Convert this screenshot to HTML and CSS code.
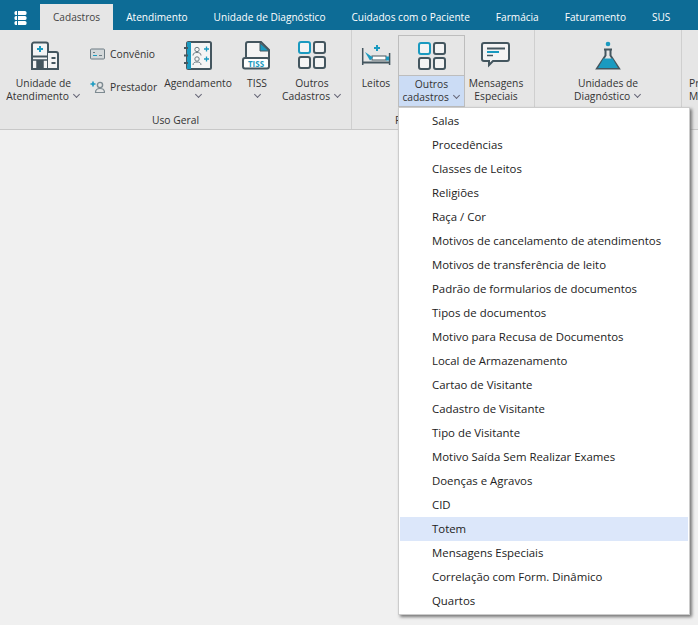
FILE: index.html
```html
<!DOCTYPE html>
<html lang="pt-BR">
  <head>
    <meta charset="UTF-8">
    <meta name="viewport" content="width=device-width, initial-scale=1.0">
    <title>Cadastros</title>
    <link rel="stylesheet" href="styles.css">
  </head>
  <body>
    <div class="tabs">
      <div class="app-icon">
        <svg width="13" height="14" viewBox="0 0 13 14"><rect x="0.500" y="0" width="12" height="4" rx="1.500" fill="#fff"/><rect x="0.500" y="5" width="12" height="4" rx="1.500" fill="#fff"/><rect x="0.500" y="10" width="12" height="4" rx="1.500" fill="#fff"/><path d="M3.500 0v14" stroke="#0d6c96"/></svg>
      </div>
      <div class="tab tab-active">Cadastros</div>
      <div class="tab">Atendimento</div>
      <div class="tab">Unidade de Diagnóstico</div>
      <div class="tab">Cuidados com o Paciente</div>
      <div class="tab">Farmácia</div>
      <div class="tab">Faturamento</div>
      <div class="tab">SUS</div>
    </div>

    <div class="ribbon">
      <div class="group group-geral">
        <div class="group-items">
          <div class="btn btn-unidade">
            <svg class="icon" width="30" height="30" viewBox="0 0 30 30" fill="none" stroke="#44565f" stroke-width="2">
              <path d="M3 28V3.500a2 2 0 0 1 2-2h12a2 2 0 0 1 2 2V28z" fill="#f4f4f4"/>
              <path d="M19 11h8a2 2 0 0 1 2 2v15H19" fill="#f4f4f4"/>
              <path d="M3 19h16M8 28v-9h6v9" fill="#44565f" stroke-width="1.500"/>
              <path d="M3 15.500h16M22.500 17h4M22.500 22h4"/>
              <path d="M11 5v6M8 8h6" stroke="#1a9ac0"/>
            </svg>
            <span class="label">Unidade de<br>Atendimento <span class="chev"></span></span>
          </div>
          <div class="small-col">
            <div class="small-btn">
              <svg width="15" height="12" viewBox="0 0 15 12" fill="#d3d8da" stroke="#6c7b83"><rect x="0.500" y="1" width="14" height="10" rx="1"/><path d="M3 7.500h4" stroke="#1a9ac0"/><path d="M3 4.500h2M9 7.500h3" stroke="#6c7b83"/></svg>
              <span>Convênio</span>
            </div>
            <div class="small-btn">
              <svg width="15" height="12" viewBox="0 0 15 12" fill="none"><path d="M3 0.500v5M0.500 3h5" stroke="#1a9ac0" stroke-width="1.600"/><circle cx="10" cy="4" r="2.600" stroke="#7d8a91" stroke-width="1.400"/><path d="M5.500 11.500c0-3 2-4 4.500-4s4.500 1 4.500 4z" stroke="#7d8a91" stroke-width="1.200"/></svg>
              <span>Prestador</span>
            </div>
          </div>
          <div class="btn btn-agenda">
            <svg class="icon" width="30" height="30" viewBox="0 0 30 30" fill="none">
              <rect x="4" y="1" width="24" height="27" rx="1.500" stroke="#44565f" stroke-width="2" fill="#f4f4f4"/>
              <rect x="4" y="1" width="4" height="27" fill="#1a9ac0"/>
              <path d="M1 7h4M1 14.500h4M1 22h4" stroke="#44565f" stroke-width="2"/>
              <circle cx="14" cy="8.500" r="2.200" stroke="#6c7b83"/>
              <path d="M10 14.500c0-2.500 2-3 4-3s4 .5 4 3M10 24c0-2.500 2-3 4-3s4 .5 4 3" stroke="#6c7b83"/>
              <circle cx="14" cy="18" r="2.200" stroke="#6c7b83"/>
              <path d="M21 8h5M23.500 5.500v5M21 18h5M23.500 15.500v5" stroke="#1a9ac0" stroke-width="1.300"/>
            </svg>
            <span class="label">Agendamento<br><span class="chev"></span></span>
          </div>
          <div class="btn btn-tiss">
            <svg class="icon" width="30" height="30" viewBox="0 0 30 30" fill="none">
              <path d="M4 18V3a2 2 0 0 1 2-2h13l8 8v9" stroke="#44565f" stroke-width="2" fill="#f4f4f4"/>
              <path d="M18 2v8h9z" fill="#1a9ac0" stroke="#44565f"/>
              <rect x="1" y="17" width="26" height="10.500" rx="2" fill="#fff" stroke="#44565f" stroke-width="2"/>
              <text x="14" y="25.500" text-anchor="middle" class="tiss-text">TISS</text>
            </svg>
            <span class="label">TISS<br><span class="chev"></span></span>
          </div>
          <div class="btn btn-outros">
            <svg class="icon" width="30" height="30" viewBox="0 0 30 30" fill="#f4f4f4" stroke="#44565f" stroke-width="2">
              <rect x="2" y="1" width="11" height="11" rx="2" stroke="#1a9ac0"/>
              <rect x="17" y="1" width="11" height="11" rx="2"/>
              <rect x="2" y="16" width="11" height="11" rx="2"/>
              <rect x="17" y="16" width="11" height="11" rx="2"/>
            </svg>
            <span class="label">Outros<br>Cadastros <span class="chev"></span></span>
          </div>
        </div>
        <div class="group-name">Uso Geral</div>
      </div>

      <div class="group group-rec">
        <div class="group-items">
          <div class="btn btn-leitos">
            <svg class="icon" width="30" height="30" viewBox="0 0 30 30" fill="none">
              <path d="M1.700 7v17M28.600 12v12" stroke="#44565f" stroke-width="1.500"/>
              <path d="M2 21.500h26" stroke="#44565f" stroke-width="2"/>
              <rect x="11" y="15" width="14" height="4" fill="#fff" stroke="#44565f"/>
              <path d="M4 11l8 5.500-3 3z" fill="#1a9ac0"/>
              <path d="M25 15.500h3v4h-3z" fill="#1a9ac0"/>
              <path d="M16 4v6M13 7h6" stroke="#1a9ac0" stroke-width="2"/>
            </svg>
            <span class="label">Leitos</span>
          </div>
          <div class="split">
            <div class="split-top">
              <svg class="icon" width="30" height="30" viewBox="0 0 30 30" fill="#f4f4f4" stroke="#44565f" stroke-width="2">
                <rect x="2" y="1" width="11" height="11" rx="2" stroke="#1a9ac0"/>
                <rect x="17" y="1" width="11" height="11" rx="2"/>
                <rect x="2" y="16" width="11" height="11" rx="2"/>
                <rect x="17" y="16" width="11" height="11" rx="2"/>
              </svg>
            </div>
            <div class="split-bottom">Outros<br>cadastros <span class="chev"></span></div>
          </div>
          <div class="btn btn-msg">
            <svg class="icon" width="30" height="30" viewBox="0 0 30 30" fill="#f4f4f4">
              <path d="M3 2h23a2 2 0 0 1 2 2v14a2 2 0 0 1-2 2H12l-4 4v-4H3a2 2 0 0 1-2-2V4a2 2 0 0 1 2-2z" stroke="#44565f" stroke-width="2"/>
              <path d="M6 7.500h18" stroke="#44565f" stroke-width="2"/>
              <path d="M6 11h12" stroke="#1a9ac0" stroke-width="2"/>
              <path d="M6 14.500h6" stroke="#44565f" stroke-width="1.500"/>
            </svg>
            <span class="label">Mensagens<br>Especiais</span>
          </div>
        </div>
        <div class="group-name group-name-cut">R</div>
      </div>

      <div class="group group-diag">
        <div class="group-items">
          <div class="btn btn-diag">
            <svg class="icon" width="30" height="30" viewBox="0 0 30 30" fill="none">
              <circle cx="15" cy="3" r="2.300" fill="#1a9ac0"/>
              <path d="M11 8.500h8M12.500 8.500v6L4 27.500h22l-8.500-13v-6" stroke="#44565f" stroke-width="2"/>
              <path d="M10.500 17.500h9L25 27H5z" fill="#1a9ac0"/>
            </svg>
            <span class="label">Unidades de<br>Diagnóstico <span class="chev"></span></span>
          </div>
        </div>
      </div>

      <div class="group group-last">
        <div class="group-items">
          <div class="btn btn-last">
            <span class="icon-gap"></span>
            <span class="label">Pr<br>M</span>
          </div>
        </div>
      </div>
    </div>

    <ul class="menu">
      <li>Salas</li>
      <li>Procedências</li>
      <li>Classes de Leitos</li>
      <li>Religiões</li>
      <li>Raça / Cor</li>
      <li>Motivos de cancelamento de atendimentos</li>
      <li>Motivos de transferência de leito</li>
      <li>Padrão de formularios de documentos</li>
      <li>Tipos de documentos</li>
      <li>Motivo para Recusa de Documentos</li>
      <li>Local de Armazenamento</li>
      <li>Cartao de Visitante</li>
      <li>Cadastro de Visitante</li>
      <li>Tipo de Visitante</li>
      <li>Motivo Saída Sem Realizar Exames</li>
      <li>Doenças e Agravos</li>
      <li>CID</li>
      <li class="menu-hover">Totem</li>
      <li>Mensagens Especiais</li>
      <li>Correlação com Form. Dinâmico</li>
      <li>Quartos</li>
    </ul>
  </body>
</html>
```

FILE: styles.css
```css
body{
    margin: 0;
    height: 625px;
    overflow: hidden;
    background-color: #f0f0f0;
    font-family: "Open Sans", "Noto Sans", sans-serif;
    font-size: 10.3px;
    color: #333;
}

.tabs{
    display: flex;
    align-items: flex-end;
    height: 30px;
    background-color: #0d6c96;
    color: white;
    font-size: 10.1px;
}

.app-icon{
    width: 40px;
    height: 30px;
    padding-top: 6px;
    box-sizing: border-box;
    flex-shrink: 0;
    display: flex;
    align-items: center;
    justify-content: center;
}

.tab{
    height: 26px;
    line-height: 26px;
    padding: 0 13px;
    white-space: nowrap;
}

.tab-active{
    background-color: #e6e6e6;
    color: #444;
}

.ribbon{
    display: flex;
    height: 99px;
    background-color: #e6e6e6;
    border-bottom: 1px solid #c8c8c8;
    overflow: hidden;
}

.group{
    display: flex;
    flex-direction: column;
    border-right: 1px solid #cfcfcf;
    box-sizing: border-box;
    flex-shrink: 0;
}

.group-geral{ width: 352px; }
.group-rec{ width: 183px; }
.group-diag{ width: 147px; }
.group-last{ width: 16px; border-right: none; }

.group-items{
    display: flex;
    height: 78px;
    padding-top: 5px;
}

.group-name{
    text-align: center;
    line-height: 17px;
}

.group-name-cut{
    text-align: left;
    padding-left: 43px;
}

.btn{
    display: flex;
    flex-direction: column;
    align-items: center;
    text-align: center;
    flex-shrink: 0;
    white-space: nowrap;
}

.btn-unidade{ width: 87px; }
.btn-agenda{ width: 78px; }
.btn-tiss{ width: 40px; }
.btn-outros{ width: 70px; }
.btn-leitos{ width: 46px; padding-left: 2px; box-sizing: border-box; }
.btn-msg{ width: 62px; }
.btn-diag{ width: 146px; }
.btn-last{ width: 16px; padding-left: 7px; align-items: flex-start; text-align: left; }

.icon{
    margin-top: 6px;
    margin-bottom: 6px;
}

.icon-gap{
    height: 42px;
}

.label{
    line-height: 13px;
}

.small-col{
    width: 72px;
    flex-shrink: 0;
}

.small-btn{
    display: flex;
    align-items: center;
    gap: 5px;
    height: 33px;
    padding-left: 3px;
    white-space: nowrap;
}

.small-col .small-btn:first-child{
    margin-top: 2px;
}

.chev{
    display: inline-block;
    width: 4px;
    height: 4px;
    margin: 0 2px 3px 2px;
    border-right: 1px solid #667;
    border-bottom: 1px solid #667;
    transform: rotate(45deg);
}

.split{
    width: 67px;
    height: 72px;
    flex-shrink: 0;
    border: 1px solid #bdbdbd;
    box-sizing: border-box;
}

.split-top{
    height: 40px;
    display: flex;
    justify-content: center;
    border-bottom: 1px solid #bdbdbd;
    box-sizing: border-box;
}

.split-bottom{
    height: 30px;
    background-color: #cbdcf5;
    text-align: center;
    line-height: 13px;
    padding-top: 2px;
    box-sizing: border-box;
    white-space: nowrap;
}

.tiss-text{
    font-size: 8px;
    font-weight: bold;
    fill: #1a9ac0;
}

.menu{
    position: absolute;
    left: 398px;
    top: 107px;
    width: 288px;
    margin: 0;
    padding: 1px;
    list-style: none;
    background-color: white;
    border: 1px solid #ccc;
    box-shadow: 2px 2px 3px #777;
    color: #222;
    font-size: 11.4px;
}

.menu li{
    height: 24px;
    line-height: 24px;
    padding-left: 32px;
}

.menu-hover{
    background-color: #dce7fa;
}
```
